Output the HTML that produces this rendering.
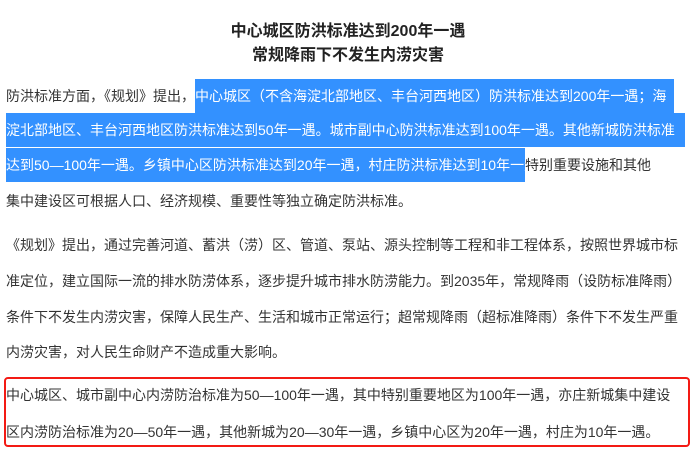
<!DOCTYPE html>
<html><head><meta charset="utf-8"><style>
body{margin:0;width:696px;height:450px;background:#fff;overflow:hidden;font-family:"Liberation Sans","Noto Sans CJK SC",sans-serif;color:#333;}
.t{position:absolute;left:0;width:696px;text-align:center;font-weight:bold;font-size:16px;color:#222;}
.l{position:absolute;left:6px;font-size:14px;white-space:nowrap;line-height:34px;height:34px;}
.h{background:#3391ff;color:#fff;}
.box{position:absolute;left:4px;top:377px;width:682px;height:66px;border:2.5px solid #f31a14;border-radius:4px;}
</style></head><body>
<div class="t" style="top:17px">中心城区防洪标准达到200年一遇</div>
<div class="t" style="top:41px">常规降雨下不发生内涝灾害</div>
<div class="l" style="top:79px">防洪标准方面，《规划》提出，<span class="h" style="display:inline-block;width:479px">中心城区（不含海淀北部地区、丰台河西地区）防洪标准达到200年一遇；海</span></div>
<div class="l h" style="top:113px;width:679px">淀北部地区、丰台河西地区防洪标准达到50年一遇。城市副中心防洪标准达到100年一遇。其他新城防洪标准</div>
<div class="l" style="top:148px"><span class="h" style="display:inline-block;width:519px">达到50—100年一遇。乡镇中心区防洪标准达到20年一遇，村庄防洪标准达到10年一遇。</span>特别重要设施和其他</div>
<div class="l" style="top:184px">集中建设区可根据人口、经济规模、重要性等独立确定防洪标准。</div>
<div class="l" style="top:228px">《规划》提出，通过完善河道、蓄洪（涝）区、管道、泵站、源头控制等工程和非工程体系，按照世界城市标</div>
<div class="l" style="top:264px">准定位，建立国际一流的排水防涝体系，逐步提升城市排水防涝能力。到2035年，常规降雨（设防标准降雨）</div>
<div class="l" style="top:300px">条件下不发生内涝灾害，保障人民生产、生活和城市正常运行；超常规降雨（超标准降雨）条件下不发生严重</div>
<div class="l" style="top:335px">内涝灾害，对人民生命财产不造成重大影响。</div>
<div class="box"></div>
<div class="l" style="top:378px">中心城区、城市副中心内涝防治标准为50—100年一遇，其中特别重要地区为100年一遇，亦庄新城集中建设</div>
<div class="l" style="top:415px">区内涝防治标准为20—50年一遇，其他新城为20—30年一遇，乡镇中心区为20年一遇，村庄为10年一遇。</div>
</body></html>
